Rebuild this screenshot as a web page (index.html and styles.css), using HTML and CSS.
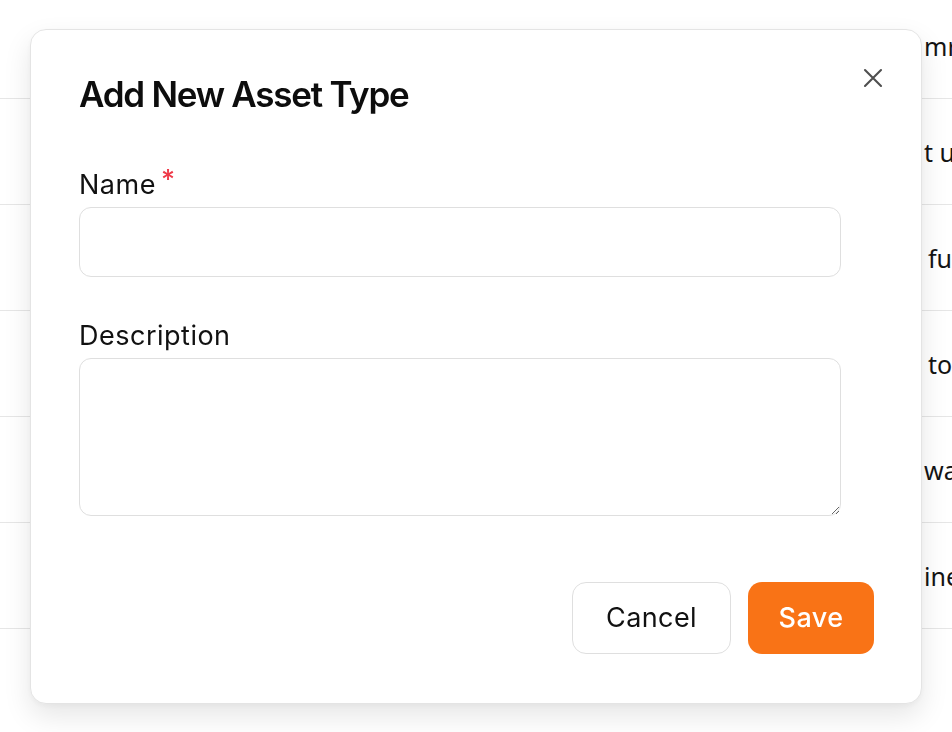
FILE: index.html
```html
<!DOCTYPE html>
<html lang="en">
<head>
<meta charset="utf-8">
<title>Add New Asset Type</title>
<link rel="stylesheet" href="styles.css">
</head>
<body>
<div class="page">
  <div class="row first"><div class="cell-a">Summary</div><div class="cell-b">mrna batch</div></div>
  <div class="row"><div class="cell-a">Setup</div><div class="cell-b">t unit</div></div>
  <div class="row"><div class="cell-a">Refuel</div><div class="cell-b indent">fuel tank</div></div>
  <div class="row"><div class="cell-a">Tools</div><div class="cell-b indent">tools</div></div>
  <div class="row"><div class="cell-a">Hardware</div><div class="cell-b">water</div></div>
  <div class="row"><div class="cell-a">Engine</div><div class="cell-b">inert</div></div>
</div>

<div class="overlay">
  <div class="modal" role="dialog" aria-labelledby="modal-title">
    <button class="close" aria-label="Close">
      <svg width="20" height="20" viewBox="0 0 20 20" fill="none" stroke="currentColor" stroke-width="2.1" stroke-linecap="round"><path d="M2 2 L18 18 M18 2 L2 18"/></svg>
    </button>
    <h2 class="title" id="modal-title">Add New Asset Type</h2>
    <form class="form">
      <div class="field">
        <label class="label" for="name">Name<span class="req">*</span></label>
        <input class="input" id="name" type="text">
      </div>
      <div class="field">
        <label class="label" for="desc">Description</label>
        <textarea class="textarea" id="desc"></textarea>
      </div>
    </form>
    <div class="actions">
      <button class="btn btn-cancel" type="button">Cancel</button>
      <button class="btn btn-save" type="button">Save</button>
    </div>
  </div>
</div>
</body>
</html>
```

FILE: styles.css
```css
* { box-sizing: border-box; }

html, body {
  margin: 0;
  padding: 0;
  background: #ffffff;
  height: 100%;
  overflow: hidden;
}

body {
  font-family: "Inter", "Liberation Sans", sans-serif;
  color: #111111;
}

.page {
  width: 100%;
}

.row {
  display: grid;
  grid-template-columns: 924px 1fr;
  height: 106px;
  align-items: center;
  border-bottom: 1px solid #e6e6e6;
  font-family: "Noto Sans", "Open Sans", sans-serif;
  font-size: 25px;
  color: #141414;
  white-space: nowrap;
  overflow: hidden;
}

.row.first {
  height: 99px;
  padding-bottom: 6px;
}

.cell-a { padding-left: 40px; }
.cell-b { padding-left: 0; }
.cell-b.indent { padding-left: 4px; }

.overlay {
  position: fixed;
  inset: 0;
  display: flex;
  align-items: center;
  justify-content: center;
}

.modal {
  position: relative;
  width: 892px;
  background: #ffffff;
  border: 1px solid #e4e4e4;
  border-radius: 16px;
  box-shadow: 0 12px 28px rgba(0, 0, 0, 0.10), 0 2px 6px rgba(0, 0, 0, 0.04);
  padding: 43px 47px 49px 48px;
}

.close {
  position: absolute;
  top: 38px;
  right: 38px;
  width: 20px;
  height: 20px;
  padding: 0;
  border: 0;
  background: none;
  color: #4f4f4f;
  display: flex;
  align-items: center;
  justify-content: center;
  cursor: pointer;
}

.title {
  margin: 0;
  font-size: 35px;
  line-height: 43px;
  font-weight: 600;
  letter-spacing: -1.25px;
  color: #0d0d0d;
}

.form {
  margin-top: 46px;
  padding-right: 33px;
  display: flex;
  flex-direction: column;
  gap: 41px;
}

.field {
  display: flex;
  flex-direction: column;
  gap: 4px;
}

.label {
  font-size: 27px;
  line-height: 36px;
  font-weight: 400;
  letter-spacing: 0.5px;
  color: #111111;
}

.req {
  color: #ef3b4a;
  margin-left: 5px;
  font-size: 27px;
  font-weight: 500;
  vertical-align: 5px;
}

.input,
.textarea {
  width: 100%;
  border: 1.5px solid #dfdfdf;
  border-radius: 12px;
  background: #ffffff;
  font-family: inherit;
  font-size: 24px;
  padding: 12px 16px;
  outline: none;
}

.input { height: 70px; }

.textarea {
  height: 158px;
  resize: vertical;
  display: block;
}

.actions {
  margin-top: 66px;
  display: flex;
  justify-content: flex-end;
  gap: 17px;
}

.btn {
  height: 72px;
  border-radius: 14px;
  font-family: "Inter", "Liberation Sans", sans-serif;
  font-size: 27px;
  letter-spacing: 0.4px;
  cursor: pointer;
}

.btn-cancel {
  width: 159px;
  background: #ffffff;
  border: 1.5px solid #dfdfdf;
  color: #111111;
  font-weight: 400;
}

.btn-save {
  width: 126px;
  background: #f97316;
  border: 0;
  color: #ffffff;
  font-weight: 500;
}
```
